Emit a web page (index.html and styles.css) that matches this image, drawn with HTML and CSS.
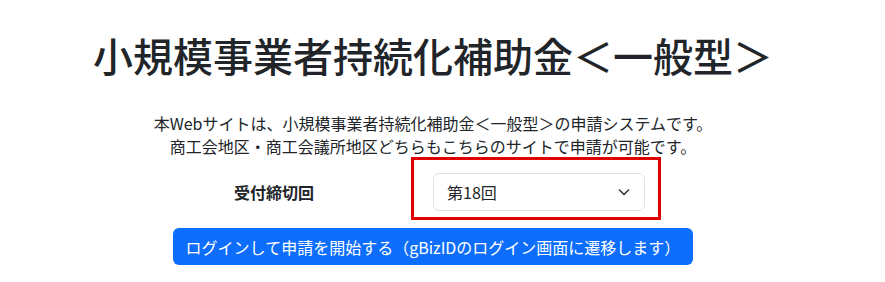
FILE: index.html
```html
<!DOCTYPE html>
<html lang="ja">
<head>
<meta charset="utf-8">
<title>小規模事業者持続化補助金＜一般型＞</title>
<link rel="stylesheet" href="styles.css">
</head>
<body>
<div class="page">
  <h1 class="title">小規模事業者持続化補助金＜一般型＞</h1>
  <p class="lead">本Webサイトは、小規模事業者持続化補助金＜一般型＞の申請システムです。<br>商工会地区・商工会議所地区どちらもこちらのサイトで申請が可能です。</p>
  <div class="form-row">
    <div class="label">受付締切回</div>
    <div class="highlight">
      <div class="select">
        <span class="select-value">第18回</span>
        <svg class="chevron" width="16" height="16" viewBox="0 0 16 16" aria-hidden="true"><path d="M3.5 6 8 10.5 12.5 6" fill="none" stroke="#343a40" stroke-width="1.6" stroke-linecap="round" stroke-linejoin="round"/></svg>
      </div>
    </div>
  </div>
  <div class="actions">
    <button class="btn-primary" type="button">ログインして申請を開始する（gBizIDのログイン画面に遷移します）</button>
  </div>
</div>
</body>
</html>
```
FILE: styles.css
```css
html, body {
  margin: 0;
  padding: 0;
  background: #fff;
}
body {
  font-family: "Noto Sans CJK JP", "Noto Sans", sans-serif;
  color: #212529;
  font-size: 16px;
}
.page {
  width: 866px;
  padding-top: 31px;
  text-align: center;
}
.title {
  margin: 0;
  font-size: 40px;
  line-height: 48px;
  font-weight: 500;
}
.lead {
  margin: 33px 0 0;
  line-height: 23px;
}
.form-row {
  width: 520px;
  margin: -1px auto 0;
  display: flex;
  align-items: center;
  text-align: left;
}
.label {
  width: 238px;
  box-sizing: border-box;
  padding-left: 61px;
  font-weight: 700;
  padding-top: 7px;
}
.highlight {
  width: 250px;
  box-sizing: border-box;
  border: 3px solid #e00000;
  padding: 13px 13px 6px 19px;
}
.select {
  height: 38px;
  box-sizing: border-box;
  border: 1px solid #dee2e6;
  border-radius: 6px;
  display: flex;
  align-items: center;
  justify-content: space-between;
  padding: 0 12px 0 13px;
}
.select-value {
  line-height: 24px;
}
.chevron {
  display: block;
}
.actions {
  margin-top: 8px;
  display: flex;
  justify-content: center;
}
.btn-primary {
  width: 520px;
  height: 37px;
  border: 0;
  border-radius: 6px;
  background: #0d6efd;
  color: #fff;
  font-family: inherit;
  font-size: 16px;
  line-height: 24px;
  padding: 0 12px;
  text-align: center;
}
```
